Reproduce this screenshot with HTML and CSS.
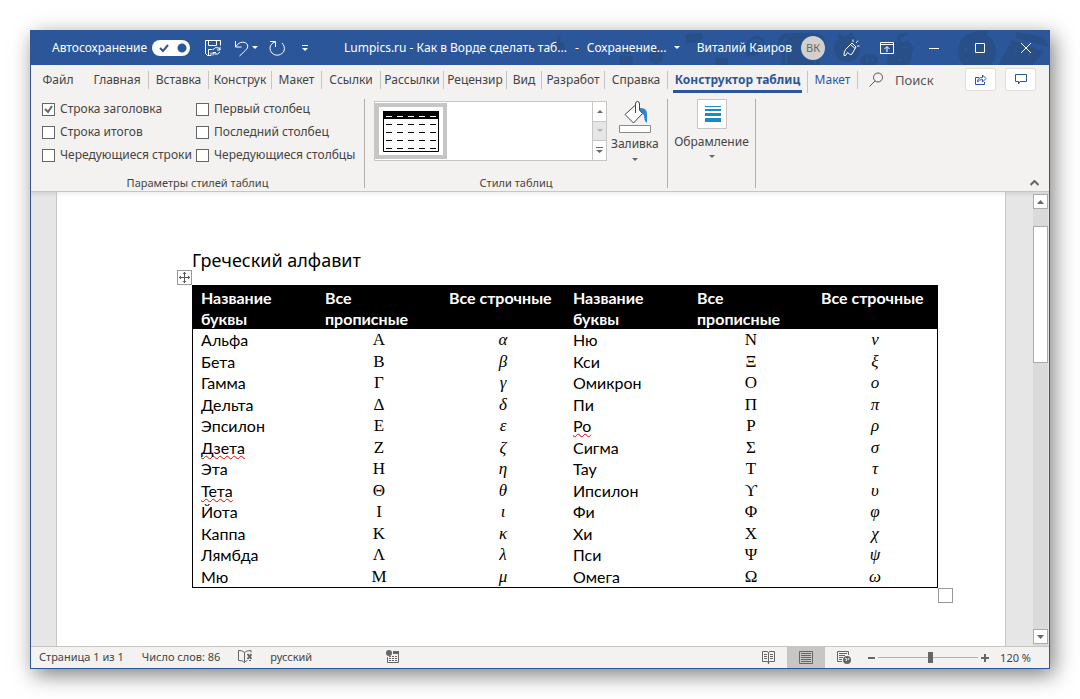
FILE: index.html
```html
<!DOCTYPE html>
<html lang="ru">
<head>
<meta charset="utf-8">
<title>Lumpics.ru - Как в Ворде сделать таблицу</title>
<link rel="stylesheet" href="styles.css">
</head>
<body>
<main class="window">
  <header class="titlebar">
    <svg class="doodles" width="500" height="35" viewBox="0 0 500 35" aria-hidden="true">
      <g fill="#284c80" opacity=".7">
        <path d="M3 12q-4 9 3 9h6q6-3 2-10l-3-1 1-5-3 1-1 6z"/>
        <path d="M71 24l13 2-1 9H70zM73 20h9v3h-9z"/>
        <circle cx="107" cy="26" r="7"/><path d="M104 19l6-4-1 5z"/>
        <path d="M137 3l15-1 3 4-4 4 1 4-8-3-7 2z"/>
        <path d="M166 27h13l-1 8h-11z"/>
        <path d="M202 7q8-5 13 1 2 7-6 15-8 5-12 1-5-9 5-17z"/>
        <path d="M242 2q-12-1-13 8 0 4 4 7l-1 18h38l1-17q7-4 5-10-2-6-13-6z"/>
        <circle cx="298" cy="18" r="13"/><path d="M289 2l7 4 7-5 3 7-17-1z"/>
        <path d="M311 30q2-7 9-7 9 0 9 8l-2 4h-15z"/>
        <path d="M340 18l25-2-5 19h-23zM338 12l22-2 3 5-24 3zM348 4l10-3 1 3-8 3 1 6h-3z"/>
        <circle cx="428" cy="20" r="19"/><path d="M426 2q3-5 14-2-5 8-14 6z"/>
        <path d="M463 9l32 11-12 15h-34zM467 1l27 5 6 10-33-9z"/>
      </g>
      <g fill="none" stroke="#2b579a" stroke-width="2">
        <path d="M238 7q-7 5-1 9v19M270 6q3 8-3 10l-1 19M203 11q7-5 9 1-2 6-8 8-7-1-1-9"/>
        <path d="M318 28v2m6-2v2M346 23v2m9-1v2m-6 3h4M417 17v3m18-2v3M467 18v3m13 1v3M294 19v2m8-2v2"/>
      </g>
    </svg>
    <div class="quick">
      <label class="autosave">Автосохранение<input type="checkbox" class="switch" checked></label>
      <button class="qbtn save" aria-label="Сохранить"><svg width="16" height="16" viewBox="0 0 16 16"><path d="M6 15.500H2.500L.5 13.500V.5h15v5M3.500.5v5h8v-5M3.500 15.500v-6h4M6 12.500v3M8 9.500q2-3 6-1.500l1 2M15 7v3h-3M15 12q-2 3-5.500 2L8 12.500M8 15.500v-3h3"/></svg></button>
      <button class="qbtn undo" aria-label="Отменить"><svg width="24" height="17" viewBox="0 0 24 17"><path d="M1.500 1v6h6M2 6.500C5 1 12 1 13.500 5c1 3-1 4.500-8 11"/><path class="solid" d="M18 6h6l-3 3z"/></svg></button>
      <button class="qbtn redo" aria-label="Повторить"><svg width="17" height="17" viewBox="0 0 17 17"><path d="M1 1.500h5.500V7M6 2C0 4 0 10 3 13c4 4 10 2 12-2 1-3 0-6-2-8"/></svg></button>
      <button class="qbtn" aria-label="Настройка панели быстрого доступа"><svg width="6" height="7" viewBox="0 0 6 7"><path d="M0 .5h6"/><path class="solid" d="M0 3h6L3 6z"/></svg></button>
    </div>
    <div class="doc-title"><span>Lumpics.ru - Как в Ворде сделать таб...</span><span>-</span><span>Сохранение...</span><svg width="6" height="4" viewBox="0 0 6 4"><path class="solid" d="M0 0h6L3 3z"/></svg></div>
    <div class="account"><span>Виталий Каиров</span><span class="avatar">ВК</span></div>
    <div class="controls">
      <button aria-label="Рисование"><svg width="17" height="18" viewBox="0 0 17 18"><path d="M1 16.500q-.5-2 1.500-6L9 4l4 4-4 7q-1 1.500-2.500 0l-2-1.500-2 3zM7.500 5.500l4.500 4M10 3V.5M13 4l2-2.500M14 7h2.500"/></svg></button>
      <button aria-label="Параметры ленты"><svg width="14" height="12" viewBox="0 0 14 12"><path d="M.5.5h13v11H.5zM.5 2.500h13M7 10V5M4.500 7L7 4.500 9.500 7"/></svg></button>
      <button aria-label="Свернуть"><svg width="10" height="10" viewBox="0 0 10 10"><path d="M0 5.500h10"/></svg></button>
      <button aria-label="Развернуть"><svg width="10" height="10" viewBox="0 0 10 10"><path d="M.5.5h9v9h-9z"/></svg></button>
      <button aria-label="Закрыть"><svg width="10" height="10" viewBox="0 0 10 10"><path d="M0 0l10 10M10 0L0 10"/></svg></button>
    </div>
  </header>

  <nav class="tabs">
    <div class="tablist">
      <button>Файл</button><button>Главная</button><button>Вставка</button><button>Конструк</button><button>Макет</button><button>Ссылки</button><button>Рассылки</button><button>Рецензир</button><button>Вид</button><button>Разработ</button><button>Справка</button><button class="active"><span>Конструктор таблиц</span></button><button class="context">Макет</button>
    </div>
    <label class="search"><svg width="15" height="15" viewBox="0 0 15 15"><circle cx="9" cy="5.500" r="4.500"/><path d="M6 9L.5 14.500"/></svg><input type="text" placeholder="Поиск" aria-label="Поиск"></label>
    <div class="share">
      <button aria-label="Поделиться"><svg width="13" height="13" viewBox="0 0 13 13"><path d="M5 4.500H1.500v7h9V9M3.500 9q0-4.500 5-4.500V2L12 5.500 8.500 9V6.500Q5 6.500 3.500 9z"/></svg></button>
      <button aria-label="Примечания"><svg width="12" height="11" viewBox="0 0 12 11"><path d="M.5.5h11v7H5L3.500 10V7.500h-3z"/></svg></button>
    </div>
  </nav>

  <section class="ribbon">
    <div class="group options">
      <div class="checks">
        <label><input type="checkbox" checked>Строка заголовка</label>
        <label><input type="checkbox">Первый столбец</label>
        <label><input type="checkbox">Строка итогов</label>
        <label><input type="checkbox">Последний столбец</label>
        <label><input type="checkbox">Чередующиеся строки</label>
        <label><input type="checkbox">Чередующиеся столбцы</label>
      </div>
      <div class="caption">Параметры стилей таблиц</div>
    </div>
    <div class="group styles">
      <div class="group-row">
        <div class="gallery">
          <button class="style-item" aria-label="Стиль таблицы"><svg width="56" height="41" viewBox="0 0 56 41"><path fill="#fff" stroke="#000" d="M.5.5h55v40H.5z"/><path d="M0 0h56v8H0z"/><path stroke="#fff" d="M3 5.500h50" stroke-dasharray="6 5"/><path stroke="#000" d="M3 13.500h50M3 21.500h50M3 29.500h50M3 37.500h50" stroke-dasharray="6 5"/></svg></button>
          <div class="gallery-nav">
            <button aria-label="Вверх"><svg width="6" height="3" viewBox="0 0 6 3"><path d="M0 3h6L3 0z"/></svg></button>
            <button class="off" aria-label="Вниз" disabled><svg width="6" height="3" viewBox="0 0 6 3"><path d="M0 0h6L3 3z"/></svg></button>
            <button aria-label="Дополнительно"><svg width="7" height="6" viewBox="0 0 7 6"><path d="M0 0h7v1H0zM0 3h7L3.500 6z"/></svg></button>
          </div>
        </div>
        <button class="big fill"><svg width="32" height="32" viewBox="0 0 32 32"><path fill="#2b88d0" d="M20 7q8-1 8 6v9q-3-2-3-8l-5-3z"/><path fill="#fff" stroke="#444" d="M16.500 12V3q0-2.500 2-2.500t2 2.500v6l3 3.500-9 9.500L6 13.500l10-9"/><path fill="#fff" stroke="#8a8a8a" d="M.5 24.500h31v7H.5z"/></svg><span>Заливка</span><i class="arrow"></i></button>
      </div>
      <div class="caption">Стили таблиц</div>
    </div>
    <div class="group borders">
      <button class="big"><svg width="30" height="30" viewBox="0 0 30 30"><path fill="#fff" stroke="#c6c6c6" d="M.5.5h29v29H.5z"/><path fill="#1e88cf" d="M8 7h16v1H8zM8 10h16v2H8zM8 14h16v3H8zM8 19h16v4H8z"/></svg><span>Обрамление</span><i class="arrow"></i></button>
    </div>
    <button class="collapse" aria-label="Свернуть ленту"><svg width="9" height="6" viewBox="0 0 9 6"><path d="M.5 5L4.500 1l4 4"/></svg></button>
  </section>

  <section class="workspace">
    <article class="page">
      <h1>Греческий алфавит</h1>
      <div class="table-wrap">
        <button class="move" aria-label="Переместить таблицу"><svg width="11" height="11" viewBox="0 0 11 11"><path stroke="#555" d="M5.500 0v11M0 5.500h11"/><path fill="#555" d="M3.500 2L5.500 0l2 2zM3.500 9l2 2 2-2zM2 3.500l-2 2 2 2zM9 3.500l2 2-2 2z"/></svg></button>
        <table>
          <thead><tr><th>Название буквы</th><th>Все прописные</th><th>Все строчные</th><th>Название буквы</th><th>Все прописные</th><th>Все строчные</th></tr></thead>
          <tbody>
            <tr><td>Альфа</td><td>Α</td><td>α</td><td>Ню</td><td>Ν</td><td>ν</td></tr>
            <tr><td>Бета</td><td>Β</td><td>β</td><td>Кси</td><td>Ξ</td><td>ξ</td></tr>
            <tr><td>Гамма</td><td>Γ</td><td>γ</td><td>Омикрон</td><td>Ο</td><td>ο</td></tr>
            <tr><td>Дельта</td><td>Δ</td><td>δ</td><td>Пи</td><td>Π</td><td>π</td></tr>
            <tr><td>Эпсилон</td><td>Ε</td><td>ε</td><td><span class="typo">Ро</span></td><td>Ρ</td><td>ρ</td></tr>
            <tr><td><span class="typo">Дзета</span></td><td>Ζ</td><td>ζ</td><td>Сигма</td><td>Σ</td><td>σ</td></tr>
            <tr><td>Эта</td><td>Η</td><td>η</td><td>Тау</td><td>Τ</td><td>τ</td></tr>
            <tr><td><span class="typo">Тета</span></td><td>Θ</td><td>θ</td><td>Ипсилон</td><td>ϒ</td><td>υ</td></tr>
            <tr><td>Йота</td><td>Ι</td><td>ι</td><td>Фи</td><td>Φ</td><td>φ</td></tr>
            <tr><td>Каппа</td><td>Κ</td><td>κ</td><td>Хи</td><td>Χ</td><td>χ</td></tr>
            <tr><td>Лямбда</td><td>Λ</td><td>λ</td><td>Пси</td><td>Ψ</td><td>ψ</td></tr>
            <tr><td>Мю</td><td>Μ</td><td>μ</td><td>Омега</td><td>Ω</td><td>ω</td></tr>
          </tbody>
        </table>
        <span class="resize"></span>
      </div>
    </article>
    <div class="scrollbar">
      <button aria-label="Прокрутить вверх"><svg width="7" height="4" viewBox="0 0 7 4"><path d="M0 4h7L3.500 0z"/></svg></button>
      <div class="track"><div class="thumb"></div></div>
      <button aria-label="Прокрутить вниз"><svg width="7" height="4" viewBox="0 0 7 4"><path d="M0 0h7L3.500 4z"/></svg></button>
    </div>
  </section>

  <footer class="status">
    <div class="info">
      <span>Страница 1 из 1</span>
      <span>Число слов: 86</span>
      <svg width="14" height="13" viewBox="0 0 14 13"><path d="M6.500 2.500Q4 0 .5 .5v10q4-.5 6 2 1-1.500 3-2M6.500 2.500v10M6.500 2.500Q8 .5 13 .5v2M13 10.500h-2"/><path stroke-width="2" d="M9.500 4l4 5M13.500 4l-4 5"/></svg>
      <span>русский</span>
      <svg class="macro" width="13" height="13" viewBox="0 0 13 13"><circle class="solid" cx="3" cy="3" r="3"/><path class="solid" d="M7 1h6v3H7z"/><path d="M1.500 7v5.500h11V4M3 6.500h2m1 0h2m1 0h2M3 8.500h2m1 0h2m1 0h2M3 10.500h2m1 0h2m1 0h2"/></svg>
    </div>
    <div class="views">
      <button aria-label="Режим чтения"><svg width="13" height="13" viewBox="0 0 13 13"><path d="M6.500 2L5.500.5h-5v10h5l1 1.500 1-1.500h5V.5h-5zM6.500 2v11M2 3.500h3M2 5.500h3M2 7.500h3M8 3.500h3M8 5.500h3M8 7.500h3"/></svg></button>
      <button class="on" aria-label="Разметка страницы"><svg width="14" height="13" viewBox="0 0 14 13"><path d="M.5.5h13v12H.5zM2 2.500h10M2 4.500h10M2 6.500h10M2 8.500h10M2 10.500h10"/></svg></button>
      <button aria-label="Веб-документ"><svg width="14" height="13" viewBox="0 0 14 13"><path d="M5 10.500H.5V.5h11V4M2 2.500h8M2 4.500h6M2 6.500h4M2 8.500h3"/><circle class="solid" cx="10" cy="9" r="4"/><path stroke="#f3f2f1" d="M8 7l2 1-1 2M12 7l-1 2"/></svg></button>
    </div>
    <div class="zoom">
      <button aria-label="Уменьшить"><svg width="7" height="2" viewBox="0 0 7 2"><path class="solid" d="M0 0h7v2H0z"/></svg></button>
      <input type="range" min="10" max="190" value="104" aria-label="Масштаб">
      <button aria-label="Увеличить"><svg width="8" height="8" viewBox="0 0 8 8"><path class="solid" d="M0 3h3V0h2v3h3v2H5v3H3V5H0z"/></svg></button>
      <span>120 %</span>
    </div>
  </footer>
</main>
</body>
</html>
```
FILE: styles.css
```css
* { box-sizing: border-box; }

body {
  margin: 0;
  padding: 30px;
  background: #fff;
  color: #444;
  font: 12px/16px "Noto Sans", "Open Sans", sans-serif;
}

button, input {
  margin: 0;
  padding: 0;
  border: 0;
  background: none;
  color: inherit;
  font: inherit;
}

svg { display: block; flex: none; fill: none; }

.window {
  display: flex;
  flex-direction: column;
  min-height: calc(100vh - 60px);
  border: 1px solid #2b579a;
  background: #f3f2f1;
  box-shadow: 4px 6px 20px rgba(0, 0, 0, .5);
}

/* Title bar */
.titlebar {
  position: relative;
  display: flex;
  align-items: center;
  height: 34px;
  background: #2b579a;
  color: #fff;
  white-space: nowrap;
  overflow: hidden;
}
.titlebar > div { position: relative; display: flex; align-items: center; }
.titlebar svg { stroke: #fff; }
.titlebar .solid { fill: #fff; stroke: none; }
.titlebar .doodles { position: absolute; right: 0; top: 0; stroke: none; }
.quick { width: 313px; padding-left: 21px; }
.autosave { display: flex; align-items: center; justify-content: space-between; width: 138px; }
.switch {
  appearance: none;
  width: 38px;
  height: 16px;
  border-radius: 8px;
  background:
    radial-gradient(circle at 30px 8px, #2b579a 4px, transparent 5px),
    url("data:image/svg+xml,%3Csvg xmlns='http://www.w3.org/2000/svg' width='38' height='16'%3E%3Cpath d='M8 8l3 3 5-6' fill='none' stroke='%232b579a' stroke-width='2'/%3E%3C/svg%3E"),
    #fff;
}
.qbtn.save { margin-left: 15px; }
.qbtn.undo { margin: 0 11px 0 13px; }
.qbtn.redo { margin-right: 16px; }
.doc-title { gap: 8px; flex: 1; }
.account { gap: 9px; margin-right: 18px; }
.avatar {
  width: 24px;
  border-radius: 12px;
  background: #d2d0ce;
  color: #666;
  font-size: 11px;
  line-height: 24px;
  text-align: center;
}
.controls button { display: flex; justify-content: center; width: 46px; }
.controls button:first-child { width: 17px; }
.controls button:nth-child(2) { width: 51px; padding-left: 3px; }

/* Tabs */
.tabs {
  display: flex;
  align-items: center;
  height: 31px;
  padding-bottom: 2px;
  line-height: 18px;
}
.tablist {
  display: grid;
  grid-template-columns: 55px 63px 60px 63px 50px 59px 63px 63px 35px 63px 63px 140px 50px;
}
.tablist button {
  height: 18px;
  border-right: 1px solid #c8c6c4;
  white-space: nowrap;
}
.tablist button:first-child { border-color: transparent; }
.tablist .active { height: 22px; margin-bottom: -4px; color: #2b579a; font-weight: 700; }
.tablist .active span { display: block; margin: 0 5px; padding-bottom: 1px; border-bottom: 3px solid #2b579a; }
.tablist .context { color: #2b579a; }
.search { display: flex; align-items: center; gap: 11px; margin-left: 11px; flex: 1; }
.search svg { stroke: #555; }
.search input { width: 60px; font-size: 13px; }
.search input::placeholder { color: #555; opacity: 1; }
.share { display: flex; gap: 9px; padding-right: 13px; }
.share button {
  display: flex;
  align-items: center;
  justify-content: center;
  width: 31px;
  height: 23px;
  border: 1px solid #e1dfdd;
  border-radius: 2px;
  background: #fff;
}
.share svg { stroke: #2b579a; }

/* Ribbon */
.ribbon {
  position: relative;
  display: flex;
  height: 96px;
  padding: 3px 0;
  border-bottom: 1px solid #c8c6c4;
}
.group {
  display: flex;
  flex-direction: column;
  justify-content: space-between;
  border-right: 1px solid #b3b0ad;
}
.options { width: 334px; }
.styles { width: 303px; }
.borders { width: 88px; }
.caption { text-align: center; font-size: 11px; line-height: 10px; }
.checks {
  display: grid;
  grid-template-columns: 154px 1fr;
  row-gap: 7px;
  padding: 2px 0 0 11px;
}
.checks label { display: flex; align-items: center; gap: 5px; white-space: nowrap; }
.checks input {
  appearance: none;
  width: 13px;
  height: 13px;
  border: 1px solid #666;
  background: #fff;
}
.checks input:checked {
  background: #fff url("data:image/svg+xml,%3Csvg xmlns='http://www.w3.org/2000/svg' width='11' height='11'%3E%3Cpath d='M2 5l3 3 4-6' fill='none' stroke='%23666' stroke-width='2'/%3E%3C/svg%3E");
}
.group-row { display: flex; gap: 4px; padding: 2px 0 0 9px; }
.gallery {
  display: flex;
  justify-content: space-between;
  width: 233px;
  height: 60px;
  border: 1px solid #c8c6c4;
  background: #fff;
}
.style-item {
  display: flex;
  align-items: center;
  justify-content: center;
  width: 72px;
  height: 56px;
  margin-top: 1px;
  border: 4px solid #c6c6c6;
}
.style-item path:nth-child(2) { fill: #000; }
.gallery-nav { display: grid; grid-template-rows: 1fr 1fr 1fr; width: 14px; border-left: 1px solid #c8c6c4; }
.gallery-nav button { display: flex; align-items: center; justify-content: center; }
.gallery-nav svg { fill: #666; }
.gallery-nav .off { border: solid #c8c6c4; border-width: 1px 0; background: #e6e6e6; }
.gallery-nav .off svg { fill: #b3b3b3; }
.big { display: flex; flex-direction: column; align-items: center; }
.fill { gap: 3px; }
.borders .big { gap: 5px; }
.arrow { margin-top: 3px; border: solid transparent; border-width: 3px 3px 0; border-top-color: #666; }
.borders .arrow { margin-top: 0; }
.collapse { position: absolute; right: 10px; bottom: 5px; }
.collapse svg { stroke: #666; stroke-width: 2; }

/* Document */
.workspace {
  display: flex;
  flex: 1;
  padding-left: 25px;
  background: linear-gradient(rgba(0, 0, 0, .08), transparent 5px) #e6e6e6;
}
.page {
  flex: 1;
  padding: 54px 67px 56px 135px;
  border: solid #c8c6c4;
  border-width: 0 1px;
  background: linear-gradient(#f0f0f0, #fff 5px);
  color: #000;
}
.page h1 { margin: 0 0 11px; font-size: 18px; font-weight: 400; line-height: 28px; }
.table-wrap { position: relative; font: 16px/21px Lato, "Noto Sans", sans-serif; }
table {
  width: 100%;
  table-layout: fixed;
  border: 1px solid #000;
  border-spacing: 0;
}
th, td { padding: 0 8px; }
th {
  height: 43px;
  padding-top: 1px;
  background: #000;
  color: #fff;
  text-align: left;
  vertical-align: top;
}
td { height: 22px; line-height: 20px; }
tr:nth-child(even) td { height: 21px; }
td:not(:nth-child(3n+1)) { text-align: center; font-family: "Liberation Serif", serif; font-size: 17px; }
td:nth-child(3n) { font-style: italic; }
.typo { text-decoration: underline wavy #e00 1px; text-underline-offset: 1px; text-decoration-skip-ink: none; }
.move {
  position: absolute;
  left: -15px;
  top: -15px;
  display: flex;
  align-items: center;
  justify-content: center;
  width: 15px;
  height: 15px;
  border: 1px solid #999;
  background: #fff;
}
.resize {
  position: absolute;
  right: -15px;
  bottom: -15px;
  width: 15px;
  height: 15px;
  border: 1px solid #999;
}
.scrollbar {
  display: flex;
  flex-direction: column;
  width: 15px;
  margin: 0 1px 0 27px;
  padding: 2px 0;
  background: #dadada;
}
.scrollbar button {
  display: flex;
  align-items: center;
  justify-content: center;
  height: 15px;
  border: 1px solid #ababab;
  background: #fff;
}
.scrollbar svg { fill: #666; }
.track { flex: 1; padding-top: 17px; }
.thumb { height: 137px; border: 1px solid #ababab; background: #fff; }

/* Status bar */
.status {
  display: flex;
  height: 22px;
  border-top: 1px solid #c8c6c4;
  font-size: 11px;
  white-space: nowrap;
}
.status svg { stroke: #666; }
.status .solid { fill: #666; stroke: none; }
.info { display: flex; align-items: center; flex: 1; gap: 18px; padding: 0 0 2px 8px; }
.macro { margin-left: 56px; }
.views { display: flex; }
.views button { display: flex; align-items: center; justify-content: center; width: 38px; }
.views .on { background: #c8c6c4; }
.zoom { display: flex; align-items: center; gap: 3px; padding: 0 18px 0 5px; }
.zoom input { appearance: none; width: 100px; height: 11px; background: linear-gradient(#b3b0ad, #b3b0ad) center / 100% 1px no-repeat; }
.zoom input::-webkit-slider-thumb { appearance: none; width: 5px; height: 11px; background: #666; }
.zoom span { margin-left: 8px; }
```
